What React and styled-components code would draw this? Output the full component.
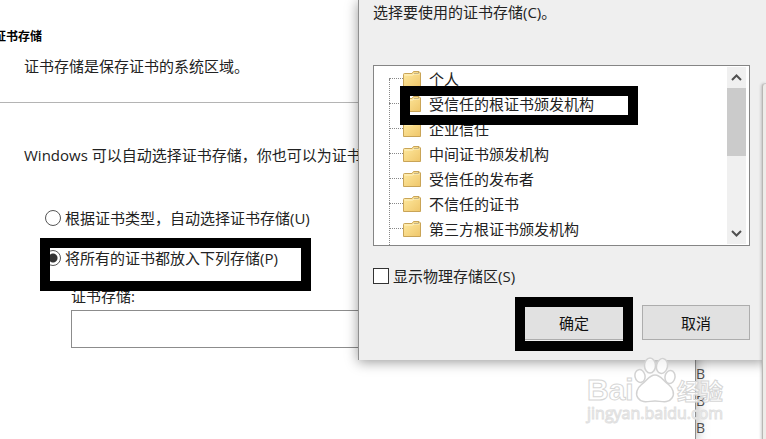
import React from "react";
import styled, { createGlobalStyle, css } from "styled-components";

const Global = createGlobalStyle`
  *, *::before, *::after { box-sizing: border-box; }
  body {
    margin: 0;
    background: #fff;
    color: #222;
    font: 15px/20px "Open Sans", "Noto Sans CJK SC", sans-serif;
  }
`;

const Desktop = styled.div`
  position: relative;
  display: flex;
  min-height: 100vh;
  overflow: hidden;
`;

const Wizard = styled.main`
  flex: 1;
  min-width: 0;
  overflow: hidden;
  background: #fff;
  border-right: 1px solid #8e8e8e;
  box-shadow: 0 0 12px rgba(0, 0, 0, 0.35);
  z-index: 1;
`;

const WizardHeader = styled.header`
  padding: 28px 0 26px 24px;
  border-bottom: 1px solid #b4b4b4;
`;

const WizardTitle = styled.h1`
  margin: 0 0 10px -30px;
  color: #000;
  font-size: 12px;
  line-height: 18px;
  font-weight: 700;
`;

const Text = styled.p`
  margin: 0;
  white-space: nowrap;
`;

const WizardBody = styled.div`
  padding: 42px 0 0 24px;
`;

const Options = styled.div`
  display: flex;
  flex-direction: column;
  align-items: flex-start;
  gap: 20px;
  margin: 43px 0 18px 21px;
`;

const marked = css`
  position: relative;
  &::after {
    content: "";
    position: absolute;
    z-index: 2;
    border: 10px solid #000;
    pointer-events: none;
  }
`;

const Option = styled.label`
  display: flex;
  align-items: center;
  gap: 4px;
  white-space: nowrap;
  ${(p) =>
    p.$marked &&
    css`
      ${marked}
      &::after { inset: -10px -33px -23px -5px; }
    `}
`;

const Radio = styled.input`
  appearance: none;
  width: 16px;
  height: 16px;
  margin: 0;
  border: 1px solid #555;
  border-radius: 50%;
  background: #fff;
  &:checked {
    background: radial-gradient(circle, #333 0 4px, #fff 5px);
  }
`;

const StoreField = styled.div`
  display: flex;
  flex-direction: column;
  gap: 4px;
  margin: 0 24px 0 47px;
`;

const StoreInput = styled.input`
  width: 100%;
  height: 38px;
  padding: 0 8px;
  border: 1px solid #8c8c8c;
  background: #fff;
  font: inherit;
`;

const Files = styled.aside`
  display: flex;
  flex-direction: column;
  width: 70px;
  padding-top: 360px;
  color: #555;
  font-size: 14px;
  line-height: 27px;
`;

const Dialog = styled.section`
  position: absolute;
  z-index: 2;
  top: 0;
  left: 358px;
  right: 0;
  padding: 2px 16px 20px 14px;
  border-left: 1px solid #8f8f8f;
  background: #efefef;
  box-shadow: 0 2px 12px rgba(0, 0, 0, 0.4);
`;

const StoreList = styled.div`
  display: flex;
  height: 181px;
  margin: 43px 0 20px;
  border: 1px solid #858585;
  background: #fff;
`;

const Tree = styled.ul`
  position: relative;
  flex: 1;
  margin: 0;
  padding: 0 0 0 15px;
  list-style: none;
  &::before {
    content: "";
    position: absolute;
    left: 15px;
    top: 13px;
    bottom: 0;
    border-left: 1px dotted #888;
  }
`;

const TreeRow = styled.li`
  display: flex;
  align-items: center;
  height: 25px;
  white-space: nowrap;
  ${(p) =>
    p.$marked &&
    css`
      ${marked}
      &::after { left: 11px; right: 89px; top: -5px; bottom: -9px; }
    `}
`;

const Branch = styled.span`
  width: 14px;
  border-top: 1px dotted #888;
`;

const FolderSvg = styled.svg`
  width: 18px;
  height: 18px;
  margin-right: 8px;
`;

const ScrollBar = styled.div`
  display: flex;
  flex-direction: column;
  width: 19px;
  margin: 1px 3px 1px 0;
  background: #f0f0f0;
`;

const ScrollButton = styled.button`
  display: grid;
  place-items: center;
  height: 21px;
  padding: 0;
  border: 0;
  background: transparent;
`;

const Track = styled.div`
  flex: 1;
`;

const Thumb = styled.div`
  height: 50%;
  background: #cbcbcb;
`;

const Check = styled.input`
  appearance: none;
  width: 16px;
  height: 16px;
  margin: 0;
  border: 1px solid #333;
  background: #fff;
`;

const Buttons = styled.div`
  display: flex;
  justify-content: flex-end;
  gap: 14px;
  margin-top: 19px;
`;

const Button = styled.button`
  width: 108px;
  height: 35px;
  padding: 0;
  border: 1px solid #adadad;
  background: #e1e1e1;
  color: #111;
  font: inherit;
  ${(p) =>
    p.$marked &&
    css`
      ${marked}
      &::after { inset: -9px -6px -12px -6px; }
    `}
`;

const SideWindow = styled.div`
  position: absolute;
  z-index: 3;
  top: 83px;
  right: 0;
  bottom: 0;
  width: 4px;
  border-left: 1px solid #b9b7b4;
  border-top: 1px solid #c8c8c8;
  border-radius: 4px 0 0 0;
  background: #eeece9;
  box-shadow: -1px 0 3px rgba(0, 0, 0, 0.2);
`;

const Watermark = styled.div`
  position: absolute;
  z-index: 4;
  right: 43px;
  bottom: 18px;
  width: 136px;
  color: rgba(255, 255, 255, 0.8);
  -webkit-text-stroke: 1px #d6d6d6;
`;

const Brand = styled.div`
  display: flex;
  align-items: flex-end;
  justify-content: space-between;
  font: 700 30px/26px "Liberation Sans", sans-serif;
`;

const BrandSuffix = styled.span`
  font-family: "Noto Sans CJK SC", sans-serif;
  font-size: 23px;
`;

const Site = styled.div`
  font-size: 16px;
  line-height: 20px;
  color: #fff;
  -webkit-text-stroke: 1px #e0e0e0;
`;

const PawSvg = styled.svg`
  width: 42px;
  height: 46px;
`;

function Folder() {
  return (
    <FolderSvg viewBox="0 0 18 18" aria-hidden="true">
      <defs>
        <linearGradient id="folder" x1="0" y1="0" x2="1" y2="1">
          <stop offset="0" stopColor="#ffeaa0" />
          <stop offset="1" stopColor="#efc66a" />
        </linearGradient>
      </defs>
      <path
        d="M.5 16.5V4.5Q.5 3.500 1.500 3.500H9L10.500 1.500H16L17.500 3V16.500Z"
        fill="url(#folder)"
        stroke="#c9a457"
        strokeWidth="1"
      />
      <path d="M11 3.500H15.500V2.500" fill="none" stroke="#88764e" />
      <path d="M1.500 5H9.500L11 4H16.500" fill="none" stroke="#fff3c4" />
    </FolderSvg>
  );
}

function Chevron({ down }) {
  return (
    <svg width="11" height="9" viewBox="0 0 11 9" aria-hidden="true">
      <path
        d={down ? "M1 2L5.500 6.500L10 2" : "M1 7L5.500 2.500L10 7"}
        fill="none"
        stroke="#505050"
        strokeWidth="2"
      />
    </svg>
  );
}

function Paw() {
  return (
    <PawSvg viewBox="0 0 42 46">
      <g fill="#fff" fillOpacity="0.8" stroke="#d2d2d2" strokeWidth="1.5">
        <ellipse cx="6" cy="19" rx="5" ry="6.500" transform="rotate(-12 6 19)" />
        <ellipse cx="16" cy="8.500" rx="5.500" ry="7.500" />
        <ellipse cx="28" cy="9" rx="5.500" ry="7.500" transform="rotate(12 28 9)" />
        <ellipse cx="36" cy="20" rx="5" ry="6.500" transform="rotate(8 36 20)" />
        <path d="M21 18C15 18 13 24 8 27C3 31 1 37 4 41C8 47 15 44 21 44S34 47 38 41C41 37 39 31 34 27C29 24 27 18 21 18Z" />
      </g>
      <text
        x="21"
        y="39"
        textAnchor="middle"
        fontSize="20"
        fontWeight="700"
        fill="#fff"
      >
        du
      </text>
    </PawSvg>
  );
}

const stores = [
  "个人",
  "受信任的根证书颁发机构",
  "企业信任",
  "中间证书颁发机构",
  "受信任的发布者",
  "不信任的证书",
  "第三方根证书颁发机构",
];

export default function App() {
  return (
    <Desktop>
      <Global />
      <Wizard>
        <WizardHeader>
          <WizardTitle>证书存储</WizardTitle>
          <Text>证书存储是保存证书的系统区域。</Text>
        </WizardHeader>
        <WizardBody>
          <Text>Windows 可以自动选择证书存储，你也可以为证书</Text>
          <Options>
            <Option>
              <Radio type="radio" name="placement" />
              根据证书类型，自动选择证书存储(U)
            </Option>
            <Option $marked>
              <Radio type="radio" name="placement" defaultChecked />
              将所有的证书都放入下列存储(P)
            </Option>
          </Options>
          <StoreField>
            <label htmlFor="store">证书存储:</label>
            <StoreInput id="store" type="text" />
          </StoreField>
        </WizardBody>
      </Wizard>
      <Files>
        <span>B</span>
        <span>B</span>
        <span>B</span>
      </Files>
      <Dialog role="dialog">
        <Text>选择要使用的证书存储(C)。</Text>
        <StoreList>
          <Tree>
            {stores.map((name, i) => (
              <TreeRow key={name} $marked={i === 1}>
                <Branch />
                <Folder />
                {name}
              </TreeRow>
            ))}
          </Tree>
          <ScrollBar>
            <ScrollButton type="button" aria-label="向上滚动">
              <Chevron />
            </ScrollButton>
            <Track>
              <Thumb />
            </Track>
            <ScrollButton type="button" aria-label="向下滚动">
              <Chevron down />
            </ScrollButton>
          </ScrollBar>
        </StoreList>
        <Option>
          <Check type="checkbox" />
          显示物理存储区(S)
        </Option>
        <Buttons>
          <Button type="button" $marked>
            确定
          </Button>
          <Button type="button">取消</Button>
        </Buttons>
      </Dialog>
      <SideWindow />
      <Watermark>
        <Brand>
          <span>Bai</span>
          <Paw />
          <BrandSuffix>经验</BrandSuffix>
        </Brand>
        <Site>jingyan.baidu.com</Site>
      </Watermark>
    </Desktop>
  );
}
